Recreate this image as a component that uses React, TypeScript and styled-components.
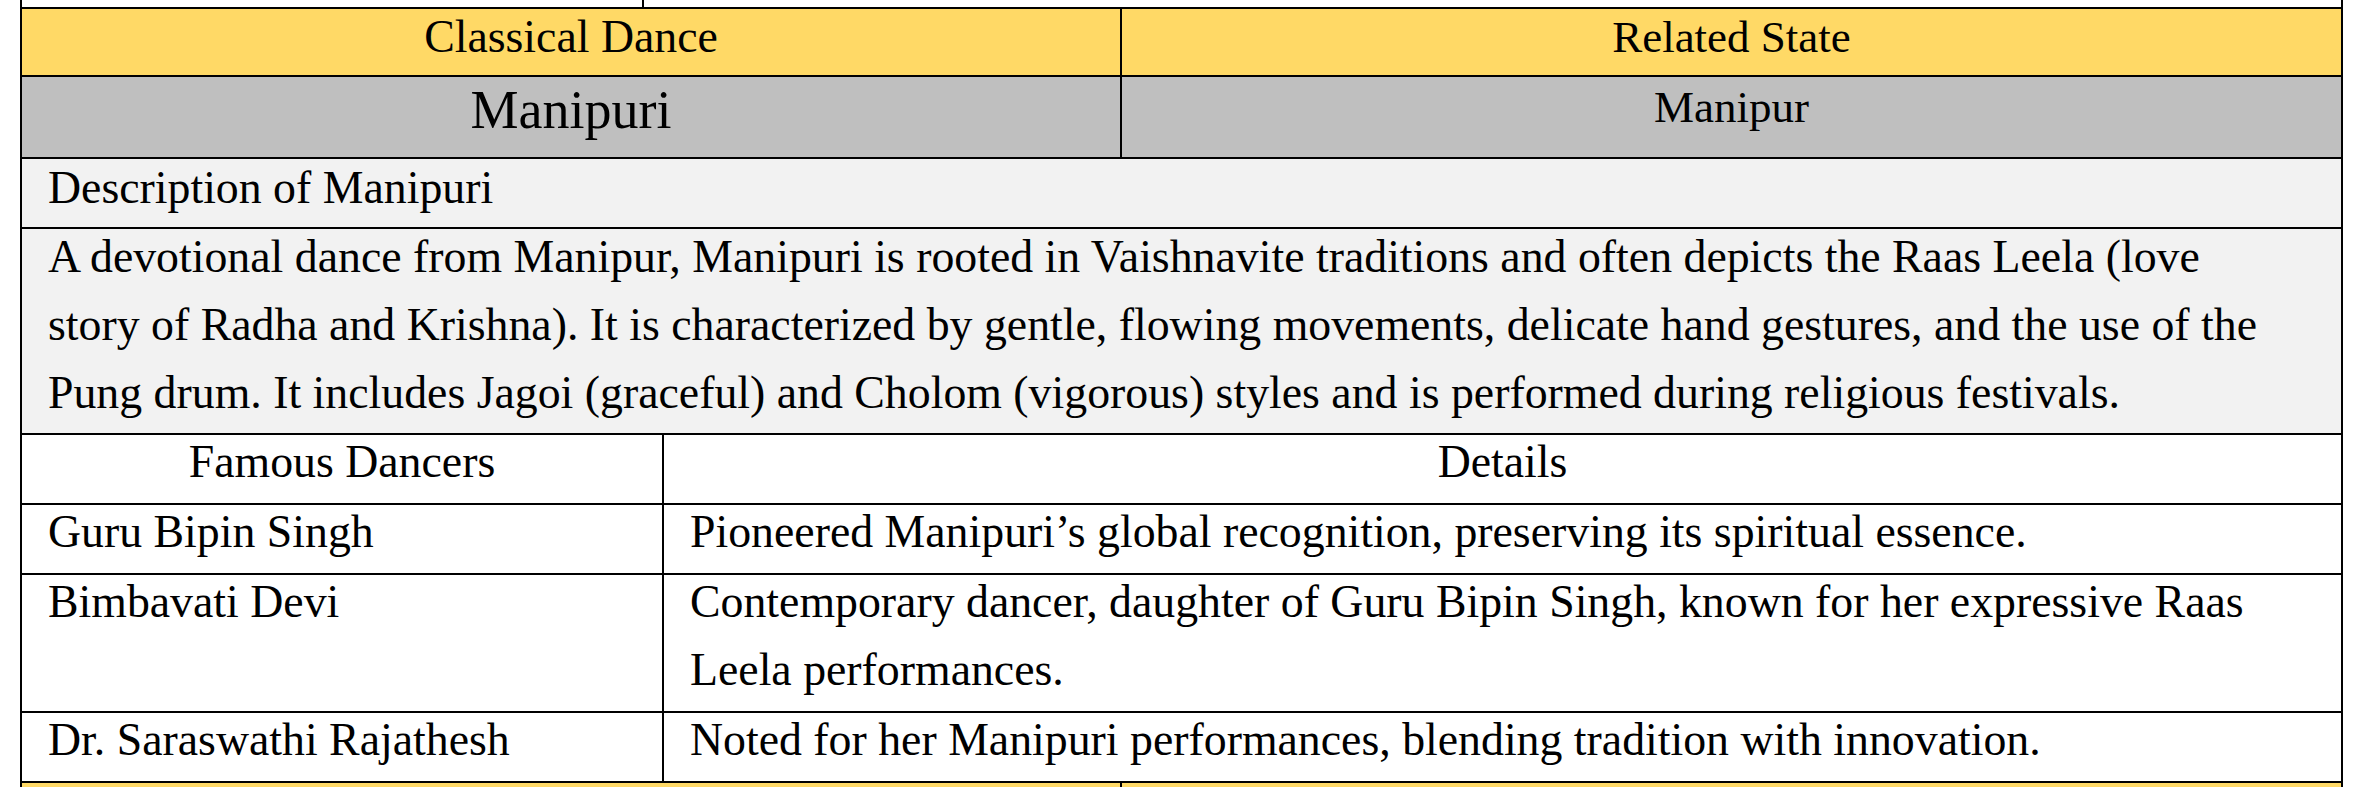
import React from 'react';
import styled, { createGlobalStyle } from 'styled-components';

const GlobalStyle = createGlobalStyle`
  html, body {
    margin: 0;
    padding: 0;
    background: #fff;
  }
  body {
    font-family: "Liberation Serif", "Times New Roman", serif;
    color: #000;
    overflow: hidden;
  }
`;

const Page = styled.div`
  height: 787px;
  overflow: hidden;
  padding-left: 20px;
`;

const Sheet = styled.div`
  width: 2323px;
  box-sizing: border-box;
  border-left: 2px solid #000;
  border-right: 2px solid #000;
  display: flex;
  flex-direction: column;
`;

const Row = styled.div<{ $cols?: string; $bg: string; $h?: number; $open?: boolean }>`
  display: grid;
  grid-template-columns: ${p => p.$cols ?? '1fr'};
  background: ${p => p.$bg};
  border-top: ${p => (p.$open ? 'none' : '2px solid #000')};
  height: ${p => (p.$h ? `${p.$h}px` : 'auto')};
`;

const Cell = styled.div<{ $align?: 'left' | 'center'; $size?: number; $right?: number }>`
  box-sizing: border-box;
  padding: 0 ${p => p.$right ?? 26}px 0 26px;
  text-align: ${p => p.$align ?? 'left'};
  font-size: ${p => p.$size ?? 45.8}px;
  line-height: 68px;
  & + & {
    border-left: 2px solid #000;
  }
`;

const Lines = styled.div<{ $lift?: number }>`
  margin-top: ${p => -(p.$lift ?? 7)}px;
  margin-bottom: ${p => p.$lift ?? 7}px;
`;

const YELLOW = '#FFD966';
const GRAY = '#BFBFBF';
const LIGHT = '#F2F2F2';

const dancers = [
  {
    name: 'Guru Bipin Singh',
    details: 'Pioneered Manipuri\u2019s global recognition, preserving its spiritual essence.',
  },
  {
    name: 'Bimbavati Devi',
    details:
      'Contemporary dancer, daughter of Guru Bipin Singh, known for her expressive Raas Leela performances.',
  },
  {
    name: 'Dr. Saraswathi Rajathesh',
    details: 'Noted for her Manipuri performances, blending tradition with innovation.',
  },
];

export default function App() {
  return (
    <>
      <GlobalStyle />
      <Page>
        <Sheet>
          <Row $cols="620px 1fr" $bg="#fff" $h={7} $open>
            <Cell />
            <Cell />
          </Row>
          <Row $cols="1098px 1fr" $bg={YELLOW} $h={66}>
            <Cell $align="center">
              <Lines $lift={6}>Classical Dance</Lines>
            </Cell>
            <Cell $align="center" $size={45}>
              <Lines $lift={6}>Related State</Lines>
            </Cell>
          </Row>
          <Row $cols="1098px 1fr" $bg={GRAY} $h={80}>
            <Cell $align="center" $size={54}>
              <Lines $lift={1}>Manipuri</Lines>
            </Cell>
            <Cell $align="center" $size={45}>
              <Lines $lift={4}>Manipur</Lines>
            </Cell>
          </Row>
          <Row $bg={LIGHT} $h={68}>
            <Cell>
              <Lines $lift={5}>Description of Manipuri</Lines>
            </Cell>
          </Row>
          <Row $bg={LIGHT}>
            <Cell $right={40}>
              <Lines $lift={6}>
                A devotional dance from Manipur, Manipuri is rooted in Vaishnavite traditions and often
                depicts the Raas Leela (love story of Radha and Krishna). It is characterized by gentle,
                flowing movements, delicate hand gestures, and the use of the Pung drum. It includes
                Jagoi (graceful) and Cholom (vigorous) styles and is performed during religious festivals.
              </Lines>
            </Cell>
          </Row>
          <Row $cols="640px 1fr" $bg="#fff">
            <Cell $align="center">
              <Lines>Famous Dancers</Lines>
            </Cell>
            <Cell $align="center">
              <Lines>Details</Lines>
            </Cell>
          </Row>
          {dancers.map(d => (
            <Row key={d.name} $cols="640px 1fr" $bg="#fff">
              <Cell>
                <Lines>{d.name}</Lines>
              </Cell>
              <Cell>
                <Lines>{d.details}</Lines>
              </Cell>
            </Row>
          ))}
          <Row $cols="1098px 1fr" $bg={YELLOW} $h={20}>
            <Cell />
            <Cell />
          </Row>
        </Sheet>
      </Page>
    </>
  );
}
